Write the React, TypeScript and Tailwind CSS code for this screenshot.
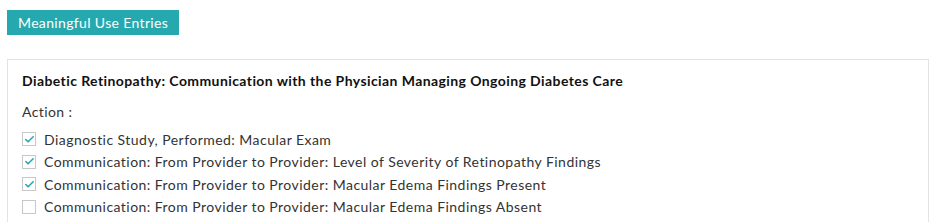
import { Check } from "lucide-react";

const ACTIONS = [
  { label: "Diagnostic Study, Performed: Macular Exam", checked: true },
  {
    label:
      "Communication: From Provider to Provider: Level of Severity of Retinopathy Findings",
    checked: true,
  },
  {
    label: "Communication: From Provider to Provider: Macular Edema Findings Present",
    checked: true,
  },
  {
    label: "Communication: From Provider to Provider: Macular Edema Findings Absent",
    checked: false,
  },
];

export default function App() {
  return (
    <div className="min-h-[222px] bg-white px-[7px] pt-[10px] font-['Lato',sans-serif] text-[#333]">
      <button
        type="button"
        className="h-[25px] bg-[#26a9ae] px-[11px] text-[14px] leading-[25px] tracking-[0.35px] text-white"
      >
        Meaningful Use Entries
      </button>

      <div className="mt-[24px] w-[922px] border border-[#e3e3e3] px-[14px] pt-[12px] pb-[10px]">
        <h3 className="text-[14px] font-bold leading-[18px] tracking-[0.41px] text-[#111]">
          Diabetic Retinopathy: Communication with the Physician Managing Ongoing Diabetes Care
        </h3>
        <p className="mt-[13px] text-[14px] leading-[18px] tracking-[0.4px]">Action :</p>
        <ul className="mt-[7px] flex flex-col">
          {ACTIONS.map((a) => (
            <li
              key={a.label}
              className="flex h-[22.5px] items-center gap-[8px] text-[14px] tracking-[0.46px]"
            >
              <span className="flex h-[14px] w-[14px] shrink-0 items-center justify-center border border-[#c8c8c8] bg-white">
                {a.checked && (
                  <Check className="h-[11px] w-[11px] text-[#26a9ae]" strokeWidth={3.5} />
                )}
              </span>
              <span>{a.label}</span>
            </li>
          ))}
        </ul>
      </div>
    </div>
  );
}
